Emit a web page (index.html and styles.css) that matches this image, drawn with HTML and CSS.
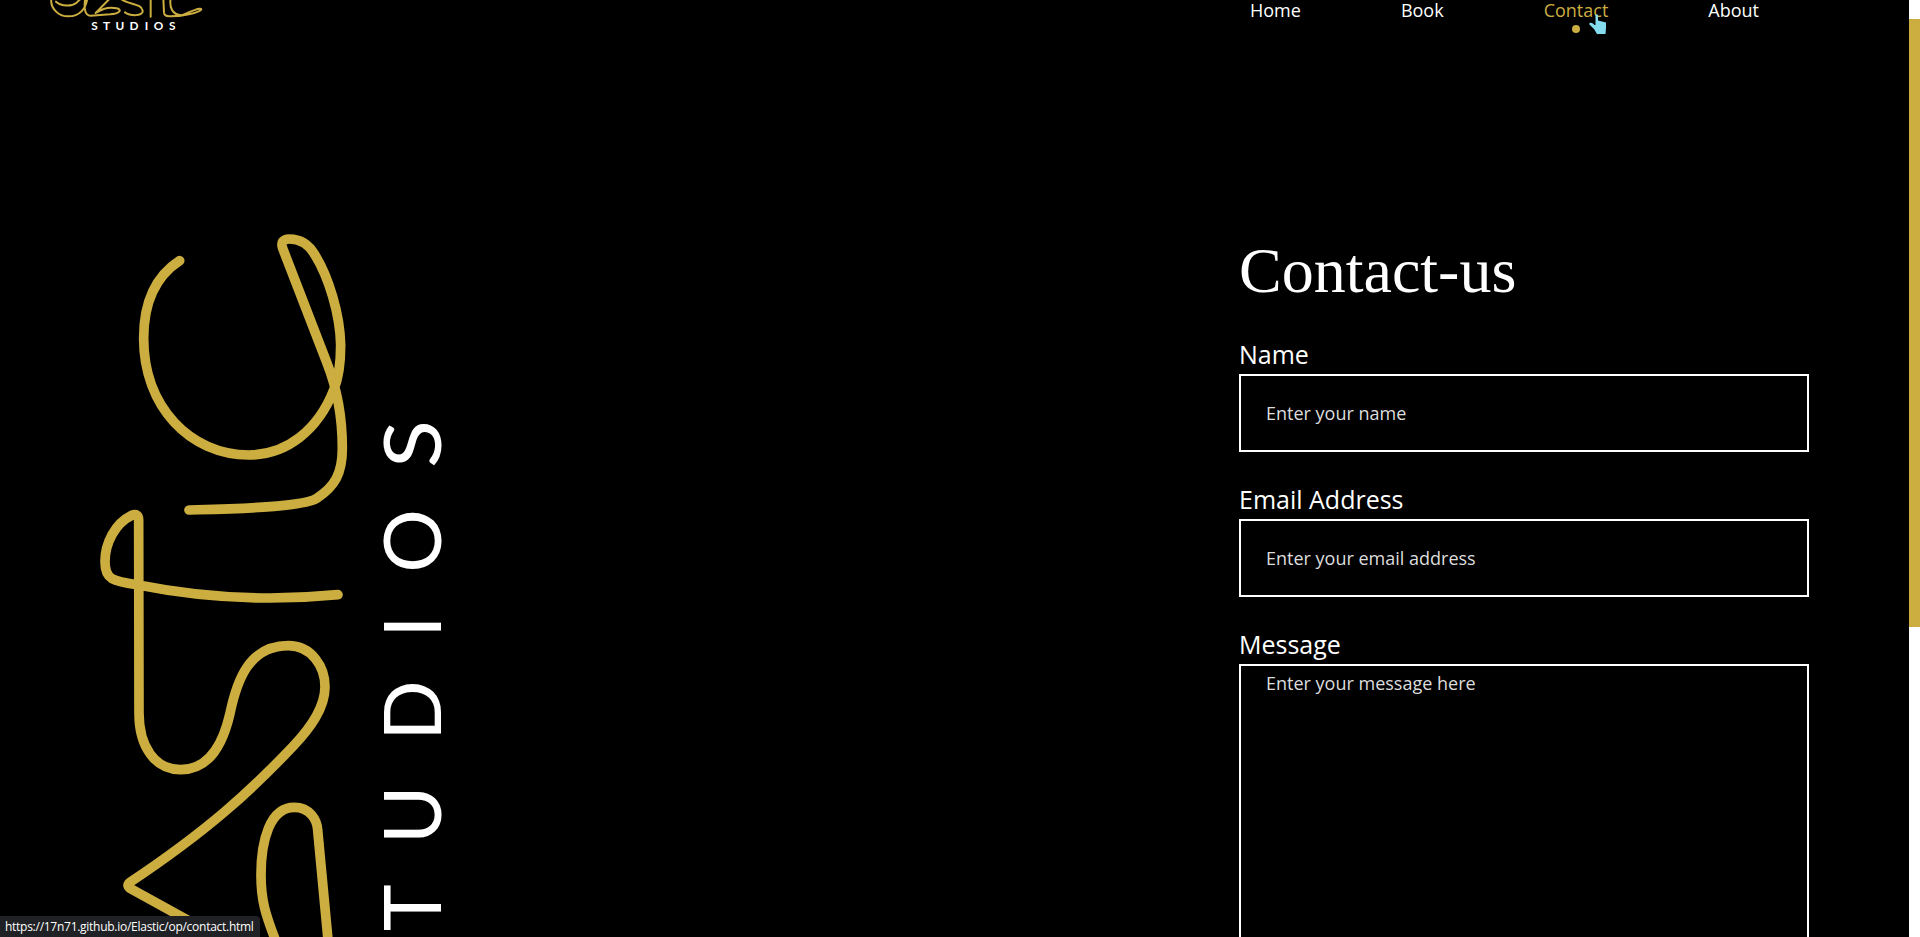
FILE: index.html
```html
<!DOCTYPE html>
<html lang="en">
<head>
<meta charset="utf-8">
<title>Elastic Studios - Contact</title>
<link rel="stylesheet" href="styles.css">
</head>
<body>
<div class="page">
  <header class="header">
    <svg class="brand" width="160" height="36" viewBox="48 0 160 36">
      <g class="brand-line" transform="scale(.33333)">
        <path d="M168 5C185 20 215 20 230 8L248-10M154-5C150 25 175 49 205 49C240 49 258 25 262-5M256-10C252 20 252 47 272 47L330 43C362 40 366 28 350 25C330 20 310 24 287 39L330-5M360-5C385 15 425 10 428 32C430 50 390 48 375 37M452 50V-5M490-5L492 38C493 48 500 49 508 49C540 50 600 38 604 28C603 22 575 32 545 46C515 45 508 20 512-5"/>
      </g>
      <text class="brand-text" y="30" x="94.5 106.500 119.800 134 146.500 158.500 172.300">STUDIOS</text>
    </svg>
    <nav class="nav">
      <a class="link">Home</a><a class="link">Book</a><a class="link active">Contact</a><a class="link">About</a>
    </nav>
  </header>
  <main class="main">
    <svg class="art" width="480" height="737" viewBox="0 200 480 737">
      <g class="art-line" transform="translate(80 200) scale(.33333)">
        <path d="M299 182C225 230 191 310 191 415C191 620 330 765 507 765C620 765 715 690 762 568C775 535 782 490 782 435C780 340 745 230 705 165C685 130 655 117 628 117C608 117 602 128 608 145L740 487C765 550 787 640 787 745C787 820 765 860 710 895C660 925 400 928 327 930"/>
        <path transform="translate(0 900)" d="M774 284C560 305 350 290 175 255C100 243 75 240 75 185C75 130 105 70 155 46Q176 38 176 60L177 640C177 740 225 809 302 809C375 809 425 750 450 640C470 545 505 437 625 437C695 437 735 500 735 560C735 625 690 685 640 738C510 875 385 990 150 1147Q136 1158 155 1168L370 1286"/>
        <path transform="translate(0 900)" d="M590 1330C555 1240 543 1200 543 1125C543 1020 570 922 643 922C690 922 711 960 713 990L745 1330"/>
      </g>
      <text class="art-text" transform="translate(441 0) rotate(-90)" y="0" x="-907.700 -814.800 -710.500 -626.700 -541">TUDIO</text>
      <text class="art-text" transform="translate(441 444) rotate(-90) scale(1.12 1)">S</text>
    </svg>
    <form class="form">
      <h1 class="title">Contact-us</h1>
      <label class="label" for="name">Name</label>
      <input class="field" id="name" placeholder="Enter your name">
      <label class="label" for="email">Email Address</label>
      <input class="field" id="email" placeholder="Enter your email address">
      <label class="label" for="message">Message</label>
      <textarea class="field area" id="message" placeholder="Enter your message here"></textarea>
    </form>
  </main>
</div>
<div class="track"><div class="thumb"></div></div>
<div class="status">https://17n71.github.io/Elastic/op/contact.html</div>
<svg class="cursor" width="20" height="22" viewBox="0 0 20 22"><path d="M6.500 1C7 0 8.500 0 9 1.500V6.500L17 8.500V14L16.500 20H8L5 15L0 10C1 8 3 8.500 5.500 11L6.500 11Z"/></svg>
</body>
</html>
```
FILE: styles.css
```css
body { margin: 0; height: 937px; display: flex; overflow: hidden; background: #000; color: #fff; font-family: "Open Sans", sans-serif; }
.page { flex: 1; height: 937px; overflow: hidden; }
.header { display: flex; justify-content: space-between; height: 200px; padding: 0 150px 0 48px; }
.brand-line, .art-line { fill: none; stroke: #cbad40; stroke-linecap: round; stroke-linejoin: round; }
.brand-line { stroke-width: 6; }
.brand-text { font: 700 11.800px Lato, sans-serif; text-anchor: middle; fill: #fff; }
.nav { display: flex; gap: 100px; height: 34px; }
.link { position: relative; font-size: 18px; line-height: 20px; }
.active { color: #cbad40; }
.active::after { content: ""; position: absolute; left: 50%; top: 25px; width: 8px; height: 8px; margin-left: -4px; border-radius: 50%; background: #cbad40; }
.main { display: flex; justify-content: space-between; height: 737px; padding-right: 100px; }
.art { flex: none; }
.art-line { stroke-width: 29; }
.art-text { font: 400 79.500px Lato, sans-serif; text-anchor: middle; fill: #fff; }
.form { width: 570px; display: flex; flex-direction: column; padding-top: 34px; }
.title { margin: 0 0 30px; font: 400 64px/74px "Liberation Serif", serif; }
.label { flex: none; height: 36px; font-size: 25px; line-height: 33px; }
.field { box-sizing: border-box; width: 570px; height: 78px; flex: none; margin: 0 0 31px; padding: 0 25px; border: 2px solid #fff; border-radius: 0; background: #000; color: #fff; font: 18px/24px "Open Sans", sans-serif; outline: 0; }
.field::placeholder { color: #ddd; opacity: 1; }
.area { height: 400px; padding-top: 5px; resize: none; margin: 0; }
.track { width: 11px; height: 918px; padding-top: 19px; background: #fff; }
.thumb { height: 608px; background: #cbad40; }
.status { position: absolute; left: 0; bottom: 0; box-sizing: border-box; width: 260px; height: 21px; padding-left: 5px; border-radius: 0 4px 0 0; background: #202124; color: #fff; font: 12px/21px "Open Sans", sans-serif; letter-spacing: -.27px; white-space: nowrap; }
.cursor { position: absolute; left: 1589px; top: 14px; fill: #86dcef; }
```
